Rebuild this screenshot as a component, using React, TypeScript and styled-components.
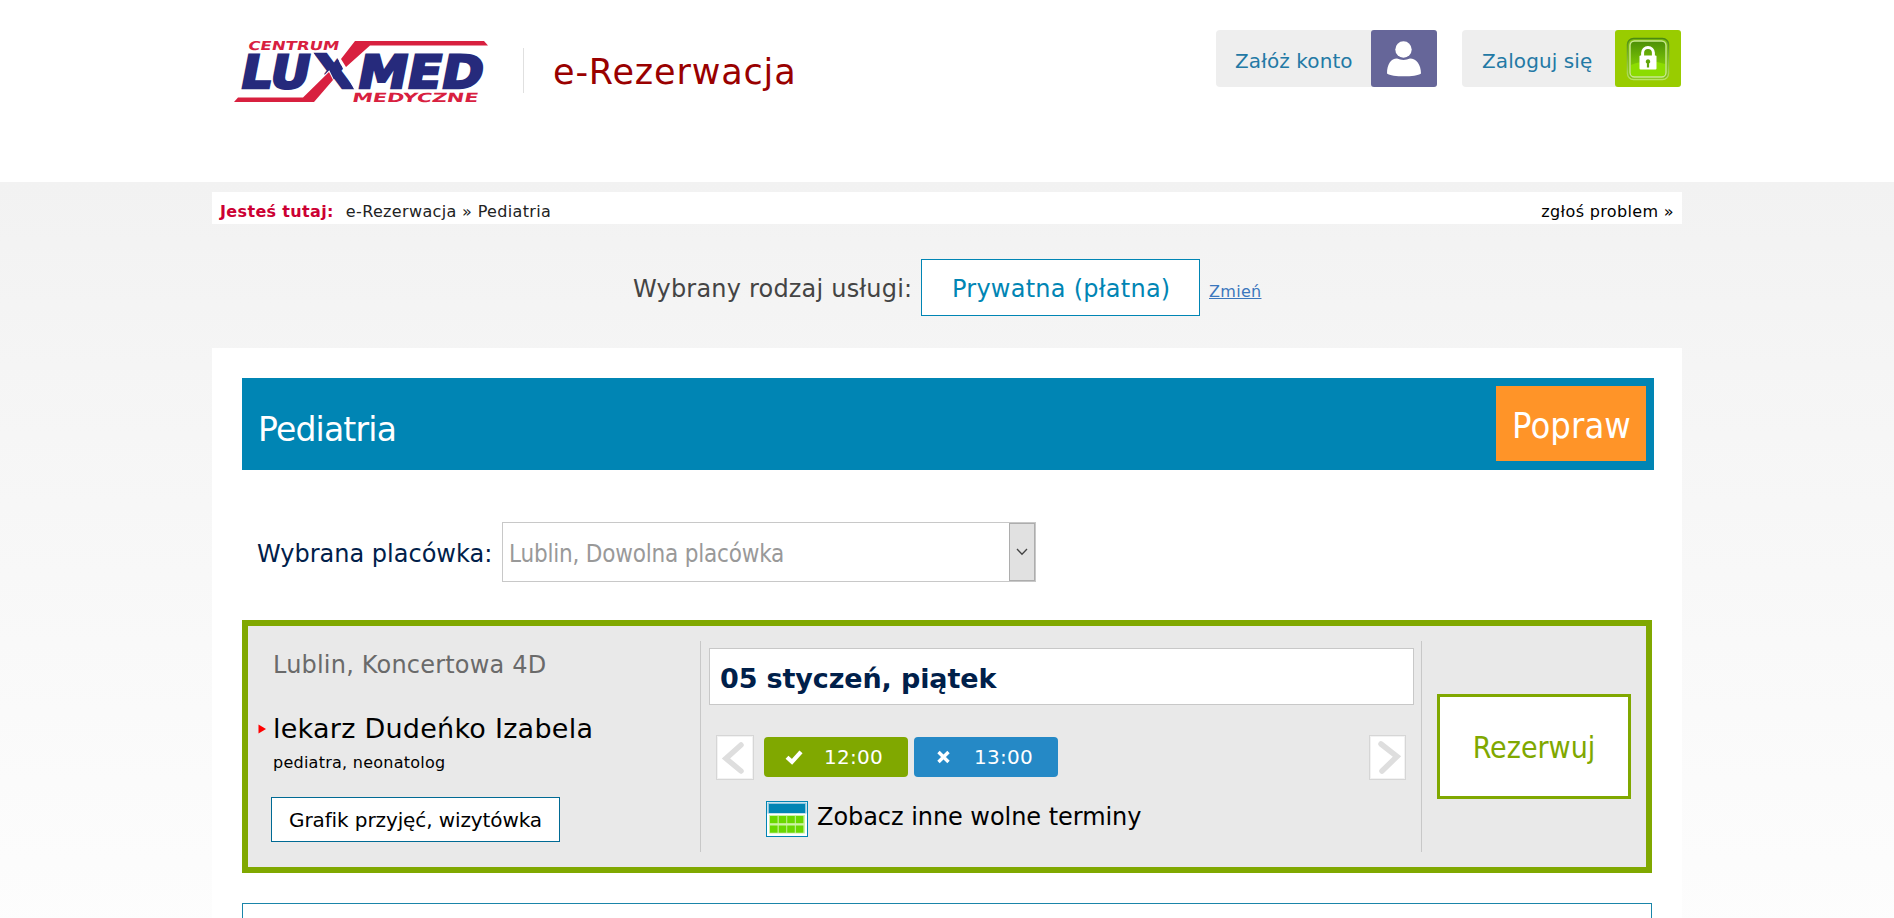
import React from "react";
import styled, { createGlobalStyle } from "styled-components";

const sans = '"DejaVu Sans", Verdana, sans-serif';
const condensed = '"DejaVu Sans Condensed", Tahoma, sans-serif';
const teal = "#0085b4";
const green = "#80a800";

const GlobalStyle = createGlobalStyle`
  *, *::before, *::after { box-sizing: border-box; }
  body { margin: 0; background: #fff; font-family: ${sans}; font-size: 16px; color: #000; }
  a { color: inherit; text-decoration: none; }
  button { font-family: inherit; padding: 0; border: 0; cursor: pointer; }
  svg { display: block; flex: none; }
`;

const Page = styled.div`
  height: 918px;
  overflow: hidden;
  white-space: nowrap;
  display: flex;
  flex-direction: column;
`;

const Container = styled.div`
  width: 1470px;
  margin: 0 auto;
`;

/* Header */
const Header = styled.header`
  height: 182px;
  flex: none;
`;
const HeaderInner = styled(Container)`
  display: flex;
  align-items: flex-start;
  padding: 30px 1px 0 16px;
`;
const LogoLink = styled.a`
  margin-top: 4px;
`;
const AppTitle = styled.div`
  margin: 18px 0 0 25px;
  height: 45px;
  padding: 4px 0 0 29px;
  border-left: 1px solid #e0e0e0;
  font-size: 35px;
  line-height: 40px;
  letter-spacing: 0.85px;
  color: #990000;
`;
const AccountNav = styled.nav`
  display: flex;
  gap: 25px;
  margin-left: auto;
`;
const AccountLink = styled.a<{ $inset: number; $width: number }>`
  display: flex;
  width: ${(p) => p.$width}px;
  height: 57px;
  padding-left: ${(p) => p.$inset}px;
  border-radius: 4px;
  background: #eee;
  color: #2379a5;
  font-size: 20px;
  line-height: 62px;
  letter-spacing: 0.1px;
`;
const AccountIcon = styled.span<{ $bg: string }>`
  display: flex;
  align-items: center;
  justify-content: center;
  width: 66px;
  height: 57px;
  margin-left: auto;
  border-radius: 3px;
  background: ${(p) => p.$bg};
`;

/* Body */
const Main = styled.main`
  flex: 1;
  padding-top: 10px;
  background: linear-gradient(#f2f2f2, #f5f5f5 20%, #fbfbfb 65%, #fff);
`;
const Breadcrumb = styled(Container)`
  display: flex;
  height: 32px;
  padding: 7px 8px 0;
  background: #fff;
  line-height: 25px;
  letter-spacing: 0.35px;
  color: #222;
`;
const Here = styled.strong`
  margin-right: 12px;
  color: #cc0033;
`;
const ReportLink = styled.a`
  margin-left: auto;
  color: #000;
`;
const ServiceRow = styled(Container)`
  display: flex;
  height: 124px;
  padding: 35px 0 0 421px;
  font-size: 24px;
  line-height: 61px;
  letter-spacing: 0.2px;
  color: #444;
`;
const ServiceLabel = styled.span`
  width: 288px;
`;
const ServiceBox = styled.div`
  width: 279px;
  height: 57px;
  padding-left: 30px;
  border: 1px solid ${teal};
  background: #fff;
  color: ${teal};
  line-height: 59px;
  letter-spacing: 0.25px;
`;
const ChangeLink = styled.a`
  margin: 8px 0 0 9px;
  font-size: 16px;
  line-height: 49px;
  letter-spacing: 0.3px;
  color: #3b77bd;
  && { text-decoration: underline; }
`;

const Panel = styled(Container)`
  min-height: 570px;
  padding: 30px 28px 0 30px;
  background: #fff;
`;
const TitleBar = styled.div`
  display: flex;
  justify-content: space-between;
  height: 92px;
  padding: 8px 8px 0 16px;
  background: ${teal};
  color: #fff;
`;
const SpecialtyName = styled.h1`
  margin: 3px 0 0;
  font-size: 33px;
  font-weight: 400;
  line-height: 81px;
  letter-spacing: -0.8px;
`;
const EditButton = styled.button`
  width: 150px;
  height: 75px;
  padding: 4px 0 0 1px;
  background: #ff9428;
  color: #fff;
  font-family: ${condensed};
  font-size: 36px;
  letter-spacing: 0.1px;
`;

const FacilityRow = styled.div`
  display: flex;
  height: 60px;
  margin-top: 52px;
  padding-left: 15px;
  font-size: 24px;
  line-height: 65px;
`;
const FacilityLabel = styled.label`
  width: 245px;
  color: #00204a;
`;
const Select = styled.div`
  display: flex;
  justify-content: space-between;
  width: 534px;
  height: 60px;
  padding-left: 6px;
  border: 1px solid #c8c8c8;
  color: #999;
  font-family: ${condensed};
  line-height: 63px;
  letter-spacing: -0.2px;
`;
const SelectArrow = styled.span`
  display: flex;
  align-items: center;
  justify-content: center;
  width: 26px;
  height: 58px;
  border: 1px solid #adadad;
  background: #e1e1e1;
`;

const Card = styled.section`
  display: flex;
  width: 1410px;
  height: 253px;
  margin-top: 38px;
  border: 6px solid ${green};
  background: #e9e9e9;
`;
const DoctorColumn = styled.div`
  width: 452px;
  padding: 24px 0 0 23px;
`;
const Address = styled.div`
  padding-left: 2px;
  font-size: 24px;
  line-height: 30px;
  letter-spacing: 0.2px;
  color: #6a6a6a;
`;
const DoctorName = styled.div`
  display: flex;
  align-items: center;
  gap: 7px;
  margin: 32px 0 0 -13px;
  font-size: 27px;
  line-height: 34px;
  letter-spacing: 0.25px;
`;
const Specialties = styled.div`
  margin: 7px 0 24px 2px;
  line-height: 20px;
  letter-spacing: 0.25px;
`;
const ScheduleButton = styled.button`
  width: 289px;
  height: 45px;
  padding-top: 1px;
  border: 1px solid #006a94;
  background: #fff;
  color: #000;
  font-size: 20px;
  letter-spacing: -0.1px;
`;

const TermColumn = styled.div`
  width: 722px;
  height: 211px;
  margin-top: 15px;
  padding: 7px 7px 0 8px;
  border: solid #c8c8c8;
  border-width: 0 1px;
`;
const DateBox = styled.div`
  height: 57px;
  padding-left: 10px;
  border: 1px solid #c8c8c8;
  background: #fff;
  color: #00204a;
  font-size: 27px;
  font-weight: 700;
  line-height: 59px;
  letter-spacing: -0.12px;
`;
const SlotRow = styled.div`
  display: flex;
  align-items: flex-start;
  gap: 6px;
  margin-top: 30px;
  padding: 0 8px 0 7px;
`;
const PagerButton = styled.button<{ $side: "prev" | "next" }>`
  width: ${(p) => (p.$side === "prev" ? 38 : 37)}px;
  height: 45px;
  margin: ${(p) => (p.$side === "prev" ? "0 4px 0 0" : "0 0 0 auto")};
  border: 1px solid #d6d6d6;
  background: #fff;
  box-shadow: inset 0 0 0 1px #f2f2f2;
`;
const Slot = styled.button<{ $chosen?: boolean }>`
  display: flex;
  align-items: center;
  gap: 21px;
  width: 144px;
  height: 40px;
  margin-top: 2px;
  padding-left: 21px;
  border-radius: 4px;
  background: ${(p) => (p.$chosen ? green : "#2589c6")};
  color: #fff;
  font-size: 20px;
  line-height: 42px;
  letter-spacing: 0.3px;
`;
const MoreTerms = styled.a`
  display: flex;
  gap: 9px;
  margin: 21px 0 0 57px;
  font-size: 24px;
  line-height: 33px;
  letter-spacing: -0.05px;
`;
const ReserveButton = styled.button`
  width: 194px;
  height: 105px;
  margin: 68px 0 0 15px;
  padding-top: 1px;
  border: 3px solid ${green};
  background: #fff;
  color: ${green};
  font-family: ${condensed};
  font-size: 30px;
`;
const NextCard = styled.section`
  width: 1410px;
  height: 200px;
  margin-top: 30px;
  border: 1px solid #1a85a9;
`;

function Logo() {
  const navy = "#262a7c";
  const red = "#d8203f";
  return (
    <svg width="270" height="74" viewBox="0 0 270 74" fontFamily="DejaVu Sans, Verdana, sans-serif" fontWeight="700">
      <defs>
        <clipPath id="stroke">
          <path d="M85 18H106L127 57H105Z" />
        </clipPath>
      </defs>
      <g fill={navy} stroke={navy} strokeWidth="2.6">
        <g transform="translate(10.5 53.6) skewX(-11)">
          <text fontSize="45.5" textLength="69" lengthAdjust="spacingAndGlyphs">LU</text>
        </g>
        <g transform="translate(127.5 53.6) skewX(-11)">
          <text fontSize="45.5" textLength="125" lengthAdjust="spacingAndGlyphs">MED</text>
        </g>
        <text x="86.5" y="53.6" fontSize="45.5" textLength="39" lengthAdjust="spacingAndGlyphs" clipPath="url(#stroke)">X</text>
      </g>
      <g fill={red} stroke="#fff" strokeWidth="2" paintOrder="stroke">
        <path d="M127 7H256L260 11.5H142L118 33L113 25Z" />
        <path d="M101 38L105 46L86 68H6L10 63.5H75Z" />
      </g>
      <g fill={red}>
        <g transform="translate(19.5 16) skewX(-12)">
          <text fontSize="12.2" textLength="91" lengthAdjust="spacingAndGlyphs">CENTRUM</text>
        </g>
        <g transform="translate(123.5 67.6) skewX(-12)">
          <text fontSize="12.6" textLength="126" lengthAdjust="spacingAndGlyphs">MEDYCZNE</text>
        </g>
      </g>
    </svg>
  );
}

function PersonIcon() {
  return (
    <svg width="36" height="38" viewBox="0 0 36 38" fill="#fff">
      <circle cx="17.5" cy="9.5" r="8.2" />
      <path d="M1 33.5C1 24 5 18.7 11 18.5C15 20.4 20 20.4 24 18.5C30 18.7 35 24 35 33.5C30 37.3 6 37.3 1 33.5Z" />
    </svg>
  );
}

function LockIcon() {
  return (
    <svg width="44" height="44" viewBox="0 0 44 44">
      <defs>
        <linearGradient id="tile" x1="0" y1="0" x2="0" y2="1">
          <stop offset="0" stopColor="#4c8f08" />
          <stop offset="0.55" stopColor="#74bd05" />
          <stop offset="1" stopColor="#8fdc00" />
        </linearGradient>
        <linearGradient id="rim" x1="0" y1="0" x2="0" y2="1">
          <stop offset="0" stopColor="#4b8a10" />
          <stop offset="1" stopColor="#b9e463" />
        </linearGradient>
      </defs>
      <rect x="1.5" y="1.5" width="41" height="41" rx="6" fill="#7fc010" stroke="url(#rim)" strokeWidth="1.5" />
      <rect x="4" y="4" width="36" height="36" rx="4.5" fill="url(#tile)" stroke="#c9e88f" strokeWidth="1.4" />
      <path d="M5 28Q22 21 39 27V36Q39 39 36 39H8Q5 39 5 36Z" fill="#8cdc00" />
      <path d="M16.6 19V15.8a5.4 5.4 0 0 1 10.8 0V19" fill="none" stroke="#fff" strokeWidth="3" />
      <rect x="13.5" y="18.5" width="17" height="14" rx="1" fill="#fff" />
      <path d="M22 22.2a2.3 2.3 0 0 1 1.1 4.3V30.5H20.9V26.5A2.3 2.3 0 0 1 22 22.2Z" fill="#5fa408" />
    </svg>
  );
}

function Chevron({ side }: { side: "prev" | "next" }) {
  const d = side === "prev" ? "M24 9L9 22.5L24 35" : "M11 8L27 20.5L12 35";
  return (
    <svg width="35" height="43" viewBox="0 0 35 43" fill="none" stroke="#dedede" strokeWidth="5.5" strokeLinecap="round">
      <path d={d} />
    </svg>
  );
}

function CalendarIcon() {
  return (
    <svg width="42" height="36" viewBox="0 0 42 36">
      <rect x="0.5" y="0.5" width="41" height="35" fill="#fff" stroke={teal} />
      <rect x="1.5" y="1.5" width="39" height="11" fill="#8cc6dd" />
      <rect x="3" y="3" width="36" height="9" fill={teal} />
      <rect x="3" y="14" width="36" height="18.5" fill="#cdf3a5" />
      {[15, 24.5].map((y) =>
        [4, 12.7, 21.2, 29.8].map((x) => <rect key={`${x}-${y}`} x={x} y={y} width="7.6" height="7.2" fill="#6ad800" />)
      )}
    </svg>
  );
}

function CheckIcon() {
  return (
    <svg width="18" height="16" viewBox="0 0 18 16">
      <path d="M2 8.2L7 12.8L16 2.8" fill="none" stroke="#fff" strokeWidth="4.2" />
    </svg>
  );
}

function CrossIcon() {
  return (
    <svg width="18" height="14" viewBox="0 0 18 14">
      <path d="M3.5 2L13.5 12M13.5 2L3.5 12" fill="none" stroke="#fff" strokeWidth="3.4" />
    </svg>
  );
}

export default function App() {
  return (
    <Page>
      <GlobalStyle />
      <Header>
        <HeaderInner>
          <LogoLink href="#"><Logo /></LogoLink>
          <AppTitle>e-Rezerwacja</AppTitle>
          <AccountNav>
            <AccountLink href="#" $inset={19} $width={221}>
              Załóż konto
              <AccountIcon $bg="#666699"><PersonIcon /></AccountIcon>
            </AccountLink>
            <AccountLink href="#" $inset={20} $width={219}>
              Zaloguj się
              <AccountIcon $bg="#99cc00"><LockIcon /></AccountIcon>
            </AccountLink>
          </AccountNav>
        </HeaderInner>
      </Header>
      <Main>
        <Breadcrumb>
          <Here>Jesteś tutaj:</Here>
          <span>e-Rezerwacja » Pediatria</span>
          <ReportLink href="#">zgłoś problem »</ReportLink>
        </Breadcrumb>
        <ServiceRow>
          <ServiceLabel>Wybrany rodzaj usługi:</ServiceLabel>
          <ServiceBox>Prywatna (płatna)</ServiceBox>
          <ChangeLink href="#">Zmień</ChangeLink>
        </ServiceRow>
        <Panel>
          <TitleBar>
            <SpecialtyName>Pediatria</SpecialtyName>
            <EditButton>Popraw</EditButton>
          </TitleBar>
          <FacilityRow>
            <FacilityLabel>Wybrana placówka:</FacilityLabel>
            <Select>
              Lublin, Dowolna placówka
              <SelectArrow>
                <svg width="12" height="8" viewBox="0 0 12 8" fill="none" stroke="#444" strokeWidth="1.3">
                  <path d="M1 1L6 6.3L11 1" />
                </svg>
              </SelectArrow>
            </Select>
          </FacilityRow>
          <Card>
            <DoctorColumn>
              <Address>Lublin, Koncertowa 4D</Address>
              <DoctorName>
                <svg width="8" height="10" viewBox="0 0 8 10" fill="#f00"><path d="M0.5 0.5L8 5L0.5 9.5Z" /></svg>
                lekarz Dudeńko Izabela
              </DoctorName>
              <Specialties>pediatra, neonatolog</Specialties>
              <ScheduleButton>Grafik przyjęć, wizytówka</ScheduleButton>
            </DoctorColumn>
            <TermColumn>
              <DateBox>05 styczeń, piątek</DateBox>
              <SlotRow>
                <PagerButton $side="prev"><Chevron side="prev" /></PagerButton>
                <Slot $chosen><CheckIcon />12:00</Slot>
                <Slot><CrossIcon />13:00</Slot>
                <PagerButton $side="next"><Chevron side="next" /></PagerButton>
              </SlotRow>
              <MoreTerms href="#"><CalendarIcon />Zobacz inne wolne terminy</MoreTerms>
            </TermColumn>
            <ReserveButton>Rezerwuj</ReserveButton>
          </Card>
          <NextCard />
        </Panel>
      </Main>
    </Page>
  );
}
